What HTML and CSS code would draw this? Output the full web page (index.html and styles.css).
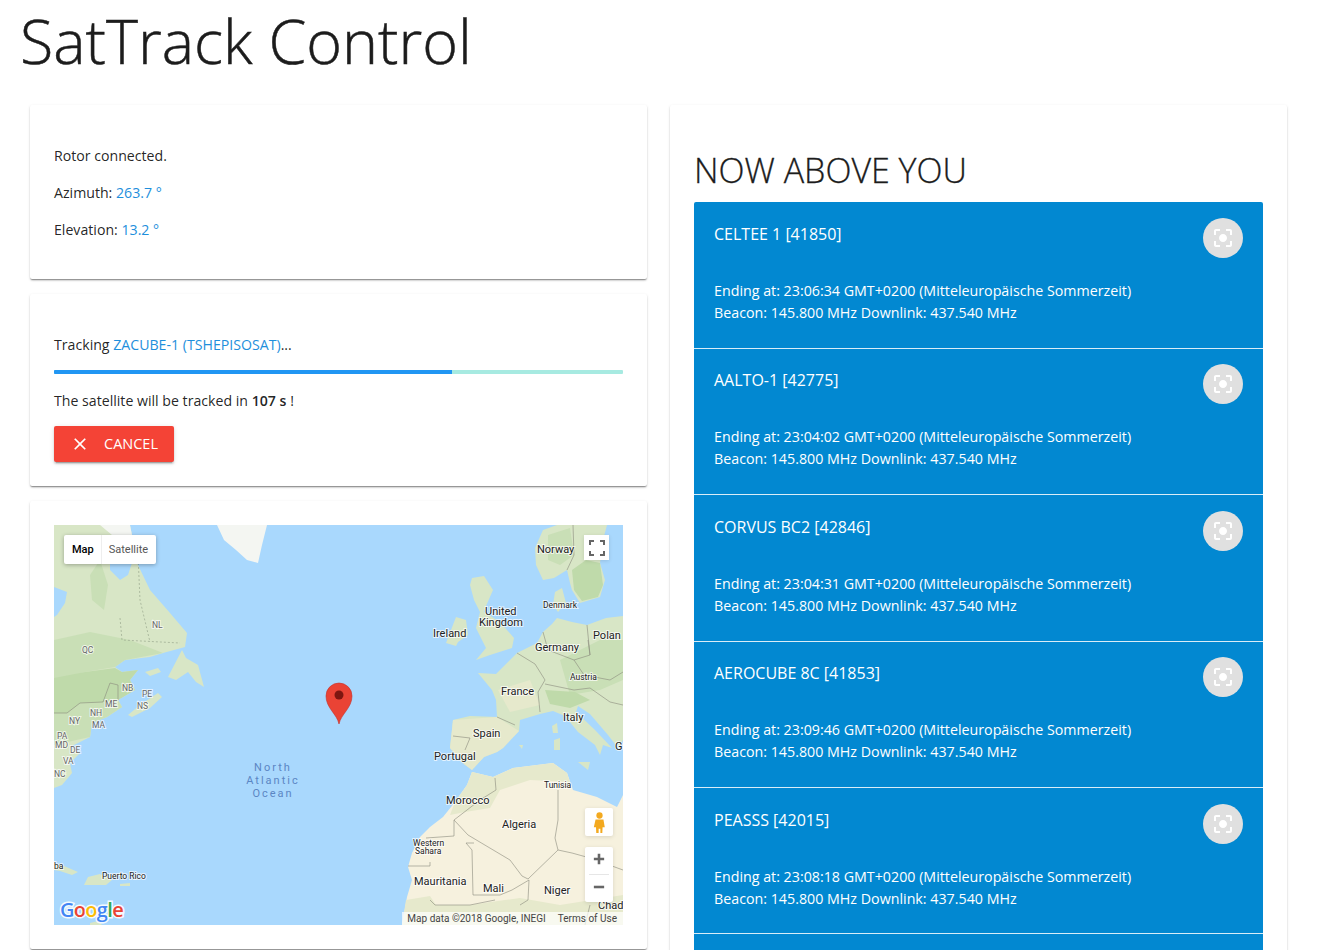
FILE: index.html
```html
<!DOCTYPE html>
<html lang="en">
<head>
<meta charset="utf-8">
<title>SatTrack Control</title>
<link rel="stylesheet" href="styles.css">
</head>
<body>
<h1 class="page-title">SatTrack Control</h1>
<main class="columns">
  <section class="column">
    <div class="card status-card">
      <p>Rotor connected.</p>
      <p>Azimuth: <span class="accent">263.7 °</span></p>
      <p>Elevation: <span class="accent">13.2 °</span></p>
    </div>
    <div class="card track-card">
      <p class="track-line">Tracking <span class="accent">ZACUBE-1 (TSHEPISOSAT)</span>...</p>
      <div class="progress"><div class="progress-fill"></div></div>
      <p class="track-line">The satellite will be tracked in <strong>107 s</strong> !</p>
      <button class="cancel-btn" type="button">
        <svg class="cancel-icon" viewBox="0 0 24 24"><path d="M19 6.41L17.59 5 12 10.59 6.41 5 5 6.41 10.59 12 5 17.59 6.41 19 12 13.41 17.59 19 19 17.59 13.41 12z"/></svg>
        <span class="cancel-label">CANCEL</span>
      </button>
    </div>
    <div class="card map-card">
      <div class="map">
        <svg class="map-art" viewBox="54 525 569 400" xmlns="http://www.w3.org/2000/svg">
          <rect class="sea" x="54" y="525" width="569" height="400"/>
          <g class="terrain">
            <!-- North America -->
            <path class="land" d="M54 525 L130 525 L134 545 L137 563 L150 590 L170 613 L187 633 L185 647 L163 653 L150 657 L125 660 L115 667 L122 672 L138 670 L130 680 L135 690 L118 700 L122 707 L107 717 L92 723 L90 737 L70 747 L80 753 L70 763 L72 773 L62 785 L54 788 Z"/>
            <path class="land-mid" d="M54 640 L90 632 L130 640 L163 653 L125 660 L115 667 L85 672 L54 680 Z"/>
            <path class="land-dark" d="M54 678 L85 672 L115 668 L122 672 L138 670 L130 680 L135 690 L118 700 L90 705 L54 720 Z"/>
            <path class="land-mid" d="M54 713 L67 713 L80 703 L103 702 L118 700 L122 707 L107 717 L92 723 L90 737 L54 745 Z"/>
            <path class="land-mid" d="M100 560 L108 585 L104 610 L92 600 L90 575 Z"/>
            <path class="ice" d="M100 525 L130 525 L134 545 L128 552 L118 540 Z"/>
            <path class="sea" d="M110 563 L132 563 L128 575 L120 580 L110 570 Z"/>
            <path class="sea" d="M54 587 L67 592 L65 603 L57 615 L54 617 Z"/>
            <path class="sea" d="M140 663 L148 665 L146 668 L140 666 Z"/>
            <path class="land" d="M168 677 L182 650 L186 658 L198 665 L204 687 L196 682 L188 672 L176 680 Z"/>
            <path class="land" d="M128 715 L140 705 L158 693 L162 697 L150 708 L132 717 Z"/>
            <path class="land" d="M145 672 L158 668 L161 672 L150 676 Z"/>
            <!-- Greenland -->
            <path class="ice" d="M217 525 L267 525 L262 545 L258 563 L247 560 L236 550 L224 540 Z"/>
            <!-- Caribbean -->
            <path class="land" d="M54 863 L64 866 L78 872 L72 875 L60 871 L54 870 Z"/>
            <path class="land" d="M88 877 L100 874 L112 880 L106 885 L96 885 L84 885 Z"/>
            <path class="land" d="M120 884 L130 883 L130 886 L120 886 Z"/>
            <path class="land" d="M90 923 L98 921 L102 925 L90 925 Z"/>
            <!-- Scandinavia -->
            <path class="land" d="M543 530 L557 525 L607 525 L603 540 L600 563 L605 580 L600 597 L580 603 L572 590 L570 583 L567 570 L554 578 L543 580 L536 565 L535 548 Z"/>
            <path class="land-dark" d="M572 570 L586 560 L600 563 L603 585 L598 597 L582 601 L574 590 Z"/>
            <path class="land-mid" d="M548 535 L570 528 L574 555 L560 565 L548 560 Z"/>
            <path class="land" d="M555 592 L562 588 L566 603 L558 612 L553 605 Z"/>
            <!-- British Isles -->
            <path class="land" d="M470 585 L472 578 L484 576 L493 590 L486 606 L484 612 L500 622 L514 638 L512 648 L490 655 L476 660 L486 648 L482 640 L476 628 L480 612 L474 600 Z"/>
            <path class="land" d="M446 643 L456 617 L466 620 L468 635 L458 642 L456 646 Z"/>
            <!-- Europe -->
            <path class="land" d="M478 673 L496 674 L517 653 L537 643 L543 632 L552 624 L557 618 L572 622 L587 625 L606 618 L623 616 L623 740 L618 748 L608 735 L590 714 L578 706 L576 712 L595 730 L612 748 L603 745 L600 755 L595 745 L578 732 L565 716 L553 711 L540 714 L520 720 L519 731 L503 748 L497 752 L484 757 L472 770 L464 764 L450 748 L452 730 L453 720 L470 716 L497 717 L496 700 L492 690 Z"/>
            <path class="land-mid" d="M560 660 L600 640 L623 640 L623 680 L600 690 L570 695 Z"/>
            <path class="land-pale" d="M453 720 L497 717 L519 731 L503 748 L497 752 L484 757 L472 770 L464 764 L450 748 Z"/>
            <path class="land-dark" d="M545 690 L575 692 L590 700 L570 708 L550 704 Z"/>
            <path class="land-pale" d="M498 690 L530 680 L540 705 L510 712 Z"/>
            <!-- Islands -->
            <path class="land" d="M552 726 L557 723 L558 733 L553 733 Z"/>
            <path class="land" d="M554 740 L560 738 L560 750 L554 750 Z"/>
            <path class="land" d="M578 762 L590 762 L588 770 Z"/>
            <path class="land" d="M519 745 L523 745 L522 749 Z"/>
            <!-- Africa -->
            <path class="desert" d="M472 772 L493 777 L513 768 L553 763 L567 773 L573 790 L597 797 L617 807 L623 795 L623 925 L402 925 L407 897 L412 880 L408 867 L412 853 L420 837 L430 827 L443 817 L455 802 L467 785 Z"/>
            <path class="land-pale" d="M472 772 L493 777 L513 768 L553 763 L567 773 L570 782 L530 780 L500 790 L490 808 L465 812 L450 815 L455 802 L467 785 Z"/>
            <path class="land-pale" d="M406 900 L430 896 L436 905 L470 905 L520 898 L560 905 L623 895 L623 925 L402 925 Z"/>
          </g>
          <g class="borders">
            <path class="border" d="M54 713 L67 713 L80 703 L103 702 L110 683 L118 685 L118 700"/>
            <path class="border-dot" d="M138 555 L140 600 L150 642 M120 618 L122 640 L180 643"/>
            <path class="border" d="M497 717 L515 725 M453 736 L470 738 L465 750 M517 653 L535 664 L545 680 L538 692 L540 712 M543 632 L548 650 L574 660 L590 655 L588 640 M574 660 L584 675 L610 680 L623 672 M545 684 L574 690 L590 688 L610 702 L623 705 M587 625 L590 655 M573 525 L574 555 L567 570"/>
            <path class="border" d="M454 820 L468 835 L510 860 L522 876 L528 879 L558 850 L572 853 L590 858 L623 870 M558 850 L555 838 L558 820 L558 790 M454 820 L454 836 L426 838 M466 843 L472 850 L473 895 L500 895 L512 890 L529 880 L528 900 L520 905 M408 866 L430 866 L430 862 M466 843 L474 843 M454 820 L480 800 L496 790 L495 778 M590 905 L585 925 M430 900 L435 905 L470 905 L495 900"/>
          </g>
          <!-- Labels -->
          <g class="label-small">
            <text x="152" y="628">NL</text><text x="82" y="653">QC</text>
            <text x="122" y="691">NB</text><text x="142" y="697">PE</text><text x="137" y="709">NS</text>
            <text x="105" y="707">ME</text><text x="90" y="716">NH</text><text x="69" y="724">NY</text><text x="92" y="728">MA</text>
            <text x="57" y="739">PA</text><text x="55" y="748">MD</text><text x="70" y="753">DE</text><text x="63" y="764">VA</text><text x="54" y="777">NC</text>
          </g>
          <g class="label-dark">
            <text x="537" y="553">Norway</text><text x="485" y="615">United</text><text x="479" y="626">Kingdom</text>
            <text x="433" y="637">Ireland</text><text x="535" y="651">Germany</text><text x="501" y="695">France</text>
            <text x="563" y="721">Italy</text><text x="473" y="737">Spain</text><text x="434" y="760">Portugal</text>
            <text x="446" y="804">Morocco</text><text x="502" y="828">Algeria</text><text x="414" y="885">Mauritania</text>
            <text x="483" y="892">Mali</text><text x="544" y="894">Niger</text><text x="598" y="909">Chad</text>
            <text x="593" y="639">Polan</text><text x="615" y="750">G</text>
          </g>
          <g class="label-tiny">
            <text x="543" y="608">Denmark</text><text x="570" y="680">Austria</text><text x="544" y="788">Tunisia</text>
            <text x="413" y="846">Western</text><text x="415" y="854">Sahara</text>
            <text x="102" y="879">Puerto Rico</text><text x="54" y="869">ba</text>
          </g>
          <g class="label-ocean">
            <text x="273" y="771">North</text><text x="273" y="784">Atlantic</text><text x="273" y="797">Ocean</text>
          </g>
          <!-- Marker -->
          <path class="pin" d="M339 724 C337 714 326 708 326 696 A13 13 0 0 1 352 696 C352 708 341 714 339 724 Z"/>
          <circle class="pin-dot" cx="339" cy="695" r="4.5"/>
          <!-- Logo -->
          <text class="logo" x="60" y="917"><tspan class="g-blue">G</tspan><tspan class="g-red">o</tspan><tspan class="g-yellow">o</tspan><tspan class="g-blue">g</tspan><tspan class="g-green">l</tspan><tspan class="g-red">e</tspan></text>
        </svg>
        <div class="map-types">
          <span class="map-type map-type-active">Map</span>
          <span class="map-type">Satellite</span>
        </div>
        <div class="map-btn fullscreen-btn">
          <svg viewBox="0 0 18 18"><path d="M1 1h5v2H3v3H1zM12 1h5v5h-2V3h-3zM1 12h2v3h3v2H1zM15 12h2v5h-5v-2h3z"/></svg>
        </div>
        <div class="map-btn pegman-btn">
          <svg viewBox="0 0 14 24"><circle cx="7" cy="4" r="3.600"/><path d="M2.500 8.500h9l1.500 9h-2.500l-.3 6.500H8v-5H6v5H3.300L3 17.500H.5z"/></svg>
        </div>
        <div class="map-btn zoom-btns">
          <div class="zoom-step"><svg viewBox="0 0 14 14"><path d="M5.500 1h3v4.500H13v3H8.500V13h-3V8.500H1v-3h4.500z"/></svg></div>
          <div class="zoom-rule"></div>
          <div class="zoom-step"><svg viewBox="0 0 14 14"><path d="M1 5.500h12v3H1z"/></svg></div>
        </div>
        <div class="attribution"><span>Map data ©2018 Google, INEGI</span><span>Terms of Use</span></div>
      </div>
    </div>
  </section>
  <section class="column">
    <div class="card above-card">
      <h2 class="above-title">NOW ABOVE YOU</h2>
      <ul class="sat-list">
        <li class="sat-item">
          <div class="sat-head"><span class="sat-name">CELTEE 1 [41850]</span><span class="focus-btn"><svg viewBox="0 0 24 24"><path d="M12 8c-2.210 0-4 1.790-4 4s1.790 4 4 4 4-1.790 4-4-1.790-4-4-4zm-7 7H3v4c0 1.100.9 2 2 2h4v-2H5v-4zM5 5h4V3H5c-1.100 0-2 .9-2 2v4h2V5zm14-2h-4v2h4v4h2V5c0-1.100-.9-2-2-2zm0 16h-4v2h4c1.100 0 2-.9 2-2v-4h-2v4z"/></svg></span></div>
          <div class="sat-body">Ending at: 23:06:34 GMT+0200 (Mitteleuropäische Sommerzeit)<br>Beacon: 145.800 MHz Downlink: 437.540 MHz</div>
        </li>
        <li class="sat-item">
          <div class="sat-head"><span class="sat-name">AALTO-1 [42775]</span><span class="focus-btn"><svg viewBox="0 0 24 24"><path d="M12 8c-2.210 0-4 1.790-4 4s1.790 4 4 4 4-1.790 4-4-1.790-4-4-4zm-7 7H3v4c0 1.100.9 2 2 2h4v-2H5v-4zM5 5h4V3H5c-1.100 0-2 .9-2 2v4h2V5zm14-2h-4v2h4v4h2V5c0-1.100-.9-2-2-2zm0 16h-4v2h4c1.100 0 2-.9 2-2v-4h-2v4z"/></svg></span></div>
          <div class="sat-body">Ending at: 23:04:02 GMT+0200 (Mitteleuropäische Sommerzeit)<br>Beacon: 145.800 MHz Downlink: 437.540 MHz</div>
        </li>
        <li class="sat-item">
          <div class="sat-head"><span class="sat-name">CORVUS BC2 [42846]</span><span class="focus-btn"><svg viewBox="0 0 24 24"><path d="M12 8c-2.210 0-4 1.790-4 4s1.790 4 4 4 4-1.790 4-4-1.790-4-4-4zm-7 7H3v4c0 1.100.9 2 2 2h4v-2H5v-4zM5 5h4V3H5c-1.100 0-2 .9-2 2v4h2V5zm14-2h-4v2h4v4h2V5c0-1.100-.9-2-2-2zm0 16h-4v2h4c1.100 0 2-.9 2-2v-4h-2v4z"/></svg></span></div>
          <div class="sat-body">Ending at: 23:04:31 GMT+0200 (Mitteleuropäische Sommerzeit)<br>Beacon: 145.800 MHz Downlink: 437.540 MHz</div>
        </li>
        <li class="sat-item">
          <div class="sat-head"><span class="sat-name">AEROCUBE 8C [41853]</span><span class="focus-btn"><svg viewBox="0 0 24 24"><path d="M12 8c-2.210 0-4 1.790-4 4s1.790 4 4 4 4-1.790 4-4-1.790-4-4-4zm-7 7H3v4c0 1.100.9 2 2 2h4v-2H5v-4zM5 5h4V3H5c-1.100 0-2 .9-2 2v4h2V5zm14-2h-4v2h4v4h2V5c0-1.100-.9-2-2-2zm0 16h-4v2h4c1.100 0 2-.9 2-2v-4h-2v4z"/></svg></span></div>
          <div class="sat-body">Ending at: 23:09:46 GMT+0200 (Mitteleuropäische Sommerzeit)<br>Beacon: 145.800 MHz Downlink: 437.540 MHz</div>
        </li>
        <li class="sat-item">
          <div class="sat-head"><span class="sat-name">PEASSS [42015]</span><span class="focus-btn"><svg viewBox="0 0 24 24"><path d="M12 8c-2.210 0-4 1.790-4 4s1.790 4 4 4 4-1.790 4-4-1.790-4-4-4zm-7 7H3v4c0 1.100.9 2 2 2h4v-2H5v-4zM5 5h4V3H5c-1.100 0-2 .9-2 2v4h2V5zm14-2h-4v2h4v4h2V5c0-1.100-.9-2-2-2zm0 16h-4v2h4c1.100 0 2-.9 2-2v-4h-2v4z"/></svg></span></div>
          <div class="sat-body">Ending at: 23:08:18 GMT+0200 (Mitteleuropäische Sommerzeit)<br>Beacon: 145.800 MHz Downlink: 437.540 MHz</div>
        </li>
        <li class="sat-item"></li>
      </ul>
    </div>
  </section>
</main>
</body>
</html>
```
FILE: styles.css
```css
* { box-sizing: border-box; }
html, body { margin: 0; height: 950px; overflow: hidden; background: #fff; }
body {
  font-family: "Open Sans", "Noto Sans", sans-serif;
  font-size: 14.150px;
  line-height: 21px;
  color: rgba(0, 0, 0, .87);
}
.page-title {
  margin: 0;
  padding: 0 0 0 20px;
  height: 105px;
  font-size: 61px;
  line-height: 82px;
  font-weight: 300;
  color: #1c1c1c;
  -webkit-text-stroke: .5px #1c1c1c;
}
.columns { display: grid; grid-template-columns: 617px 617px; column-gap: 23px; padding-left: 30px; }
.column { display: flex; flex-direction: column; gap: 15px; align-items: stretch; }
.card {
  background: #fff;
  border-radius: 2px;
  box-shadow: 0 2px 2px -1px rgba(0,0,0,.36), 0 1px 1px 0 rgba(0,0,0,.14), 0 1px 3px 0 rgba(0,0,0,.12);
  padding: 24px;
}
.card p { margin: 0 0 16px; }
.status-card { padding-top: 40px; height: 174px; }
.track-card { padding-top: 40px; height: 192px; }
.accent { color: #1e8fdc; }
.track-line { margin: 0 !important; }
.progress { height: 4px; margin: 15px 0 16px; background: #a7eae1; border-radius: 1px; overflow: hidden; }
.progress-fill { width: 70%; height: 100%; background: #2196f3; }
strong { font-weight: 600; }
.cancel-btn {
  display: flex;
  align-items: center;
  gap: 14px;
  width: 120px;
  height: 36px;
  margin-top: 15px;
  padding: 0 16px;
  border: 0;
  border-radius: 2px;
  background: #f44336;
  color: #fff;
  font: 14.500px "Open Sans", sans-serif;
  box-shadow: 0 3px 1px -2px rgba(0,0,0,.2), 0 2px 2px 0 rgba(0,0,0,.14), 0 1px 5px 0 rgba(0,0,0,.12);
}
.cancel-label { padding-bottom: 2px; }
.cancel-icon { width: 20px; height: 20px; fill: #fff; flex: none; }
.map-card { height: 448px; }
.map { position: relative; height: 400px; overflow: hidden; }
.map-art { display: block; width: 569px; height: 400px; }
.sea { fill: #a9d8fd; }
.terrain { filter: blur(.6px); }
.land { fill: #d8e6c6; }
.land-dark { fill: #bfdaaa; }
.land-mid { fill: #c9dfb6; }
.land-pale { fill: #e6e9cc; }
.ice { fill: #f4f6f2; }
.desert { fill: #f6f1de; }
.border { fill: none; stroke: #8a8a7c; stroke-width: .6; }
.border-dot { fill: none; stroke: #9aa78e; stroke-width: .7; stroke-dasharray: 2 2; }
.map-art text { font-family: Roboto, sans-serif; paint-order: stroke; stroke: rgba(255,255,255,.7); stroke-width: 2px; }
.label-small { font-size: 8.500px; fill: #666; }
.label-dark { font-size: 11px; fill: #222; }
.label-tiny { font-size: 8.500px; fill: #222; }
.label-ocean { font-size: 11px; fill: #5b86c4; letter-spacing: 2px; text-anchor: middle; }
.map-art .label-ocean text { stroke: none; }
.pin { fill: #ea4335; stroke: #c5302a; stroke-width: .6; }
.pin-dot { fill: #7d1610; }
.map-art .logo { font-family: "Open Sans", sans-serif; font-size: 20px; font-weight: 600; letter-spacing: -.7px; stroke: rgba(255,255,255,.9); stroke-width: 3px; }
.g-blue { fill: #4285f4; }
.g-red { fill: #ea4335; }
.g-yellow { fill: #fbbc05; }
.g-green { fill: #34a853; }
.map-types {
  position: absolute;
  left: 10px;
  top: 10px;
  display: flex;
  height: 29px;
  background: #fff;
  border-radius: 2px;
  box-shadow: 0 1px 4px rgba(0,0,0,.3);
  font: 11px/29px Roboto, sans-serif;
  color: #565656;
}
.map-type { padding: 0 8px 0 7px; }
.map-type-active { color: #000; font-weight: 500; border-right: 1px solid #eee; padding: 0 7px 0 8px; }
.map-btn { position: absolute; background: #fff; box-shadow: 0 1px 4px rgba(0,0,0,.12); display: flex; align-items: center; justify-content: center; }
.fullscreen-btn { left: 530px; top: 10px; width: 25px; height: 25px; }
.fullscreen-btn svg { width: 18px; height: 18px; fill: #666; }
.pegman-btn { left: 531px; top: 283px; width: 28px; height: 28px; border-radius: 2px; }
.pegman-btn svg { width: 13px; height: 21px; fill: #f3a91f; }
.zoom-btns { left: 531px; top: 322px; width: 28px; height: 55px; flex-direction: column; border-radius: 2px; }
.zoom-step { height: 27px; width: 100%; padding-bottom: 3px; display: flex; align-items: center; justify-content: center; }
.zoom-step svg { width: 12px; height: 12px; fill: #666; }
.zoom-rule { width: 20px; height: 1px; background: #e6e6e6; flex: none; }
.attribution {
  position: absolute;
  right: 0;
  bottom: 0;
  display: flex;
  gap: 12px;
  height: 13px;
  padding: 0 6px 0 5px;
  background: rgba(255,255,255,.7);
  font: 10px/13px Roboto, sans-serif;
  color: #444;
}
.above-card { height: 900px; padding-top: 41px; }
.above-title { margin: 0 0 6.500px; font-size: 34px; line-height: 49px; font-weight: 300; color: #1c1c1c; -webkit-text-stroke: .3px #1c1c1c; }
.sat-list { list-style: none; margin: 0; padding: 0; background: #0288d1; border-radius: 2px 2px 0 0; color: #fff; }
.sat-item { height: 146.400px; padding: 0 20px; border-top: 1px solid rgba(255,255,255,.85); }
.sat-item:first-child { border-top-color: transparent; }
.sat-head { display: flex; justify-content: space-between; align-items: flex-start; height: 77.500px; padding-top: 15.500px; }
.sat-name { font-size: 16px; line-height: 32px; }
.focus-btn { width: 40px; height: 40px; border-radius: 50%; background: #e0e0e0; display: flex; align-items: center; justify-content: center; }
.focus-btn svg { width: 24px; height: 24px; fill: #fff; }
.sat-body { font-size: 14.250px; line-height: 22px; }
```
